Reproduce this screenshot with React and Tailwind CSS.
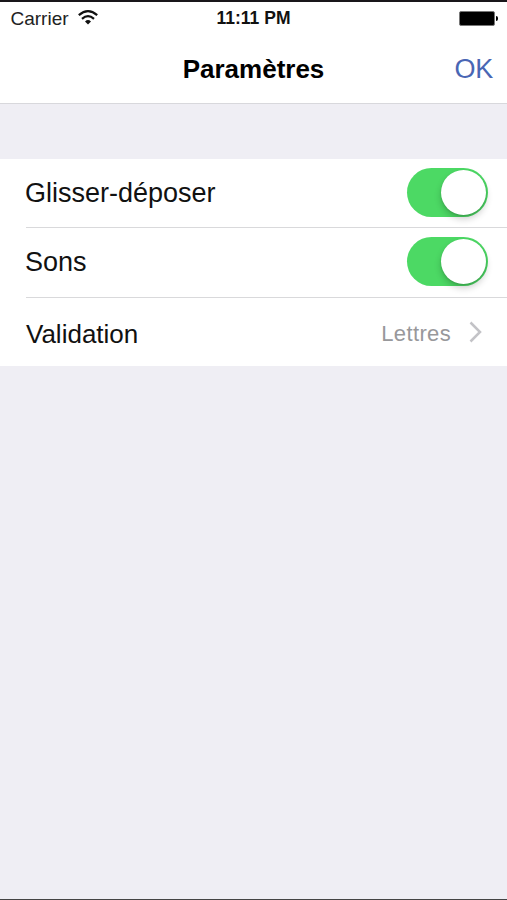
import React from "react";

function Wifi() {
  return (
    <svg className="mb-[2px]" width="20" height="15" viewBox="0 0 20 15" fill="none" stroke="#111" strokeWidth="2.2">
      <path d="M0.8 5.2Q10 -2.8 19.2 5.2" />
      <path d="M4 8.8Q10 3.6 16 8.8" />
      <path d="M7 11.4Q10 8.8 13 11.4L10 14.4Z" fill="#111" stroke="none" />
    </svg>
  );
}

function Toggle() {
  return (
    <div className="mr-[19px] mb-[2px] flex h-[49px] w-[81px] items-center justify-end rounded-full bg-[#4cd964] pr-0.5">
      <div className="h-[45px] w-[45px] rounded-full bg-white shadow-[0_4px_7px_rgba(0,0,0,0.2),0_1px_2px_rgba(0,0,0,0.12)]" />
    </div>
  );
}

function Row({ label, children, height, labelStyle = "-ml-px text-[27px]", divider = true }) {
  return (
    <div className={"ml-[26px] flex items-center justify-between " + height + (divider ? " border-b border-[#d9d9db]" : "")}>
      <span className={"leading-none text-[#111] " + labelStyle}>{label}</span>
      {children}
    </div>
  );
}

export default function App() {
  return (
    <div className="flex h-[900px] w-[507px] flex-col overflow-hidden border-t-2 border-b border-t-[#19161a] border-b-[#444] bg-[#efeef4] font-['Liberation_Sans',Arial,sans-serif]">
      <header className="h-[102px] shrink-0 border-b border-[#d8d8dc] bg-white">
        <div className="grid h-8 grid-cols-3 items-center">
          <div className="flex items-center gap-[9px] pl-[10.5px]">
            <span className="text-[19px] leading-none text-[#222]">Carrier</span>
            <Wifi />
          </div>
          <span className="pt-px text-center text-[17.5px] font-bold leading-none text-[#111]">11:11 PM</span>
          <div className="flex items-center justify-end gap-px pr-[9px]">
            <div className="h-[15px] w-[36px] rounded-[2px] border border-[#777] bg-black" />
            <div className="h-[5px] w-[2px] rounded-r-full bg-black" />
          </div>
        </div>
        <div className="grid h-[69px] grid-cols-[1fr_auto_1fr] items-center">
          <span />
          <h1 className="pt-px text-[26px] font-bold leading-none text-black">Paramètres</h1>
          <span className="pt-px pr-[14px] text-right text-[27px] leading-none tracking-[-0.3px] text-[#4966b4]">OK</span>
        </div>
      </header>
      <main className="mt-[55px] h-[207px] shrink-0 bg-white">
        <Row label="Glisser-déposer" height="h-[69px]"><Toggle /></Row>
        <Row label="Sons" height="h-[70px]"><Toggle /></Row>
        <Row label="Validation" height="h-[68px]" labelStyle="pt-[3px] text-[26px]" divider={false}>
          <div className="flex items-center gap-[18px] pr-[25px]">
            <span className="pt-[4px] text-[22px] leading-none tracking-[0.35px] text-[#98989b]">Lettres</span>
            <svg className="mb-px" width="13" height="22" viewBox="0 0 13 22" fill="none" stroke="#c3c3c7" strokeWidth="2.5">
              <path d="M1.5 1.5L11 11L1.5 20.5" />
            </svg>
          </div>
        </Row>
      </main>
    </div>
  );
}
